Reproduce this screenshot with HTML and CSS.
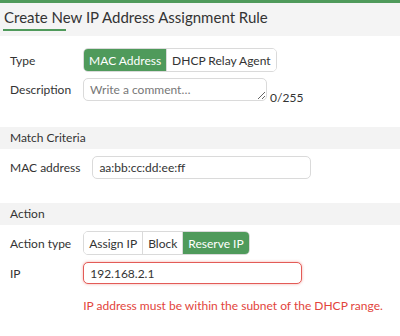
FILE: index.html
```html
<!DOCTYPE html>
<html lang="en">

<head>
  <meta charset="UTF-8" />
  <meta name="viewport" content="width=device-width, initial-scale=1.0" />
  <title>Create New IP Address Assignment Rule</title>
  <link rel="stylesheet" href="styles.css">
</head>

<body>
  <div class="topbar"></div>
  <div class="header">
    <span class="tab">Create New IP Address Assignment Rule</span>
  </div>

  <div class="section first">
    <label>Type</label>
    <div class="toggle">
      <button class="active">MAC Address</button>
      <button>DHCP Relay Agent</button>
    </div>
    <label>Description</label>
    <div class="field">
      <textarea placeholder="Write a comment…"></textarea>
      <span class="counter">0/255</span>
    </div>
  </div>

  <div class="band">Match Criteria</div>
  <div class="section match">
    <label>MAC address</label>
    <input type="text" class="mac" value="aa:bb:cc:dd:ee:ff" />
  </div>

  <div class="band">Action</div>
  <div class="section action">
    <label>Action type</label>
    <div class="toggle">
      <button>Assign IP</button>
      <button>Block</button>
      <button class="active">Reserve IP</button>
    </div>
    <label>IP</label>
    <input type="text" class="ip error" value="192.168.2.1" />
    <span></span>
    <div class="error-text">IP address must be within the subnet of the DHCP range.</div>
  </div>
</body>

</html>
```

FILE: styles.css
```css
:root {
  --green: #4f9a5b;
  --band: #f3f3f3;
  --border: #dadada;
  --red: #e2443c;
}

body {
  font-family: Lato, 'Noto Sans', sans-serif;
  font-size: 12px;
  margin: 0;
  color: #333;
  background: #fff;
}

.topbar {
  height: 3px;
  background: var(--green);
}

.header {
  height: 33px;
  background: #f4f4f4;
  padding-left: 4px;
  box-sizing: border-box;
}

.tab {
  position: relative;
  display: inline-block;
  font-size: 15px;
  line-height: 18px;
  padding: 5px 0 3px 0;
}

/* short accent line under the tab title */
.tab::after {
  content: "";
  position: absolute;
  left: -1px;
  bottom: -2px;
  width: 63px;
  height: 2px;
  background: var(--green);
}

.section {
  display: grid;
  grid-template-columns: auto auto;
  justify-content: start;
  align-items: center;
  column-gap: 12px;
  padding: 0 10px;
}

.section.first {
  padding-top: 12px;
  padding-bottom: 26px;
  row-gap: 6px;
}

.section.match {
  padding-top: 7px;
  padding-bottom: 24px;
}

.section.action {
  padding-top: 6px;
  row-gap: 7px;
}

label {
  color: #333;
}

.toggle {
  display: flex;
  border: 1px solid var(--border);
  border-radius: 5px;
  overflow: hidden;
  width: max-content;
}

.toggle button {
  font-family: inherit;
  font-size: 12px;
  height: 22px;
  padding: 0 5px;
  border: none;
  border-left: 1px solid var(--border);
  background: #fff;
  color: #333;
}

.toggle button:first-child {
  border-left: none;
}

.toggle button.active {
  background: var(--green);
  color: #fff;
}

.field {
  display: flex;
  align-items: flex-end;
  gap: 3px;
}

textarea {
  width: 184px;
  height: 23px;
  box-sizing: border-box;
  border: 1px solid var(--border);
  border-radius: 5px;
  padding: 3px 6px;
  font-family: inherit;
  font-size: 12px;
  line-height: 15px;
  color: #333;
  display: block;
}

textarea::placeholder {
  color: #777;
}

.counter {
  font-size: 12px;
  margin-bottom: -4px;
}

input {
  box-sizing: border-box;
  height: 23px;
  border: 1px solid var(--border);
  border-radius: 5px;
  padding: 0 6px;
  font-family: inherit;
  font-size: 12px;
  color: #333;
}

input.mac {
  width: 219px;
}

input.ip {
  width: 219px;
  height: 22px;
}

input.error {
  border-color: #e35b57;
  box-shadow: 0 0 3px rgba(226, 68, 60, 0.45);
}

.error-text {
  color: var(--red);
  margin-top: 7px;
  line-height: 16px;
  white-space: nowrap;
}

.band {
  background: var(--band);
  height: 22px;
  line-height: 22px;
  padding-left: 10px;
}
```
